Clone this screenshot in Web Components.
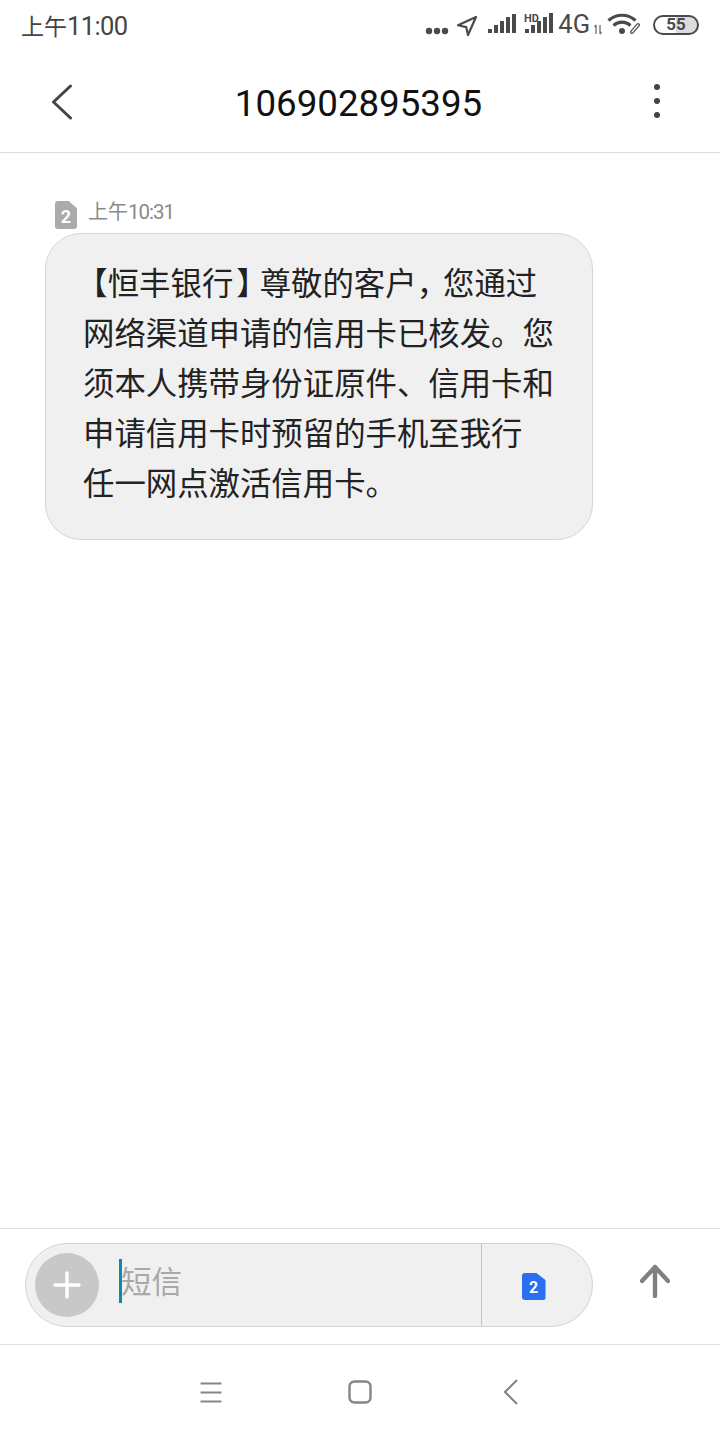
<!DOCTYPE html>
<html lang="zh">
<head>
<meta charset="utf-8">
<title>短信</title>
<style>
  html,body{margin:0;padding:0;background:#fff;}
  body{width:720px;height:1440px;overflow:hidden;font-family:"Noto Sans CJK SC","Noto Sans",sans-serif;}
  sms-screen{height:1440px;}
  /* скобки и запятая в половину кегля (halt), остальное добираем полями */
  .ob,.cb,.cm{font-feature-settings:"halt";}
  .ob{margin-left:9px;}
  .cb{margin:0 7.700px 0 3px;}
  .cm{margin-right:10.700px;}
</style>
</head>
<body>
<sms-screen>
  <status-bar slot="status" ampm="上午" time="11:00"></status-bar>
  <chat-header slot="header" title="106902895395"></chat-header>
  <sms-bubble ampm="上午" time="10:31" sim="2"><div><span class="ob">【</span>恒丰银行<span class="cb">】</span>尊敬的客户<span class="cm">，</span>您通过</div>网络渠道申请的信用卡已核发。您须本人携带身份证原件、信用卡和申请信用卡时预留的手机至我行<br>任一网点激活信用卡。</sms-bubble>
  <sms-composer slot="composer" placeholder="短信" sim="2"></sms-composer>
  <nav-bar slot="nav"></nav-bar>
</sms-screen>

<script>
(() => {
  const CJK = `"Noto Sans CJK SC","Noto Sans",sans-serif`;
  const LATIN = `Roboto,"Noto Sans CJK SC",sans-serif`;

  const define = (name, render) => {
    customElements.define(name, class extends HTMLElement {
      connectedCallback() {
        if (this.shadowRoot) return;
        this.attachShadow({ mode: 'open' }).innerHTML = render(this);
      }
    });
  };

  // карточка SIM: срезанный угол и цифра
  define('sim-badge', (el) => `
    <style>
      :host{display:block;width:var(--w,22px);height:var(--h,28px);}
      div{width:100%;height:100%;display:flex;align-items:center;justify-content:center;padding-top:var(--pt,3px);box-sizing:border-box;
        background:var(--bg,#ababab);border-radius:3px;color:#fff;font:700 var(--fs,18px)/1 ${LATIN};
        clip-path:polygon(0 0,62% 0,100% 26%,100% 100%,0 100%);}
    </style>
    <div>${el.getAttribute('n') || '2'}</div>`);

  define('sms-screen', () => `
    <style>
      :host{display:flex;flex-direction:column;width:720px;height:1440px;background:#fff;}
      main{flex:1;min-height:0;padding:47px 0 0 45px;}
    </style>
    <slot name="status"></slot>
    <slot name="header"></slot>
    <main><slot></slot></main>
    <slot name="composer"></slot>
    <slot name="nav"></slot>`);

  define('status-bar', (el) => `
    <style>
      :host{display:flex;align-items:center;height:52px;padding:0 21px;box-sizing:border-box;color:#444;}
      .time{display:flex;align-items:baseline;font:25.500px/1 ${LATIN};letter-spacing:-.6px;color:#444;flex:1;margin-top:1px;}
      .time b{font:400 23px/1 ${CJK};letter-spacing:0;}
      .icons{display:flex;align-items:center;height:52px;}
      svg{display:block;}
      .g{font:25.500px/1 ${LATIN};color:#4a4a4a;margin:-3px 0 0 5px;}
      .hd{font:700 11px ${LATIN};fill:#4a4a4a;}
      .batt{width:46px;height:20px;box-sizing:border-box;border:2.5px solid #4a4a4a;border-radius:10px;margin:-3px 0 0 13px;
        display:flex;align-items:center;justify-content:center;font:700 17px/1 ${LATIN};color:#4a4a4a;
        background:linear-gradient(90deg,#fff 0,#fff 50%,#dcdcdc 50%,#dcdcdc 100%);}
    </style>
    <div class="time"><b>${el.getAttribute('ampm')}</b>${el.getAttribute('time')}</div>
    <div class="icons">
      <svg width="24" height="8" viewBox="0 0 24 8" style="margin-top:10px"><g fill="#4a4a4a"><circle cx="4" cy="4" r="3.2"/><circle cx="12" cy="4" r="3.2"/><circle cx="20" cy="4" r="3.2"/></g></svg>
      <svg width="22" height="22" viewBox="0 0 22 22" style="margin-left:7px;margin-top:-1px"><path d="M20 2 2 10.2l8.2 1.9L12 20z" fill="none" stroke="#4a4a4a" stroke-width="2.2" stroke-linejoin="round"/></svg>
      <svg width="28" height="20" viewBox="0 0 28 20" style="margin:-4px 0 0 10px"><g fill="#4a4a4a"><rect x="0" y="15" width="4" height="4"/><rect x="6" y="11" width="4" height="8"/><rect x="12" y="7" width="4" height="12"/><rect x="18" y="3" width="4" height="16"/><rect x="24" y="0" width="4" height="19"/></g></svg>
      <svg width="29" height="22" viewBox="0 0 29 22" style="margin:-4px 0 0 8px"><text class="hd" x="0" y="9">HD</text><g fill="#4a4a4a"><rect x="1" y="16" width="4" height="4"/><rect x="7" y="12" width="4" height="8"/><rect x="13" y="8" width="4" height="12"/><rect x="19" y="4" width="4" height="16"/><rect x="25" y="0" width="4" height="20"/></g></svg>
      <span class="g">4G</span>
      <svg width="10" height="11" viewBox="0 0 10 11" style="margin-left:3px;margin-top:6px"><path d="M3 1v9M1.500 3 3 1M7 1v9M7 10l1.500-2" stroke="#777" stroke-width="1.400" fill="none"/></svg>
      <svg width="33" height="22" viewBox="0 0 33 22" style="margin:-4px 0 0 4px"><g fill="none" stroke="#4a4a4a" stroke-width="3.200"><path d="M1.500 7.500C9 .5 21 .5 28.500 7.500"/><path d="M6.500 12.500c5-4.400 12-4.400 17 0"/></g><circle cx="15" cy="18" r="3" fill="#4a4a4a"/><path d="m25 19 6-7" stroke="#4a4a4a" stroke-width="3.800" stroke-linecap="round" fill="none"/><path d="m25 19 6-7" stroke="#fff" stroke-width="1.400" stroke-linecap="round" fill="none"/></svg>
      <div class="batt">55</div>
    </div>`);

  define('chat-header', (el) => `
    <style>
      :host{display:flex;align-items:center;height:101px;box-sizing:border-box;border-bottom:1px solid #dcdcdc;padding:0 0 0 50px;}
      svg{display:block;flex:none;}
      h1{flex:1;margin:0 0 0 -11px;padding-top:4px;text-align:center;font:400 36.700px/1 ${LATIN};color:#111;}
      .more{display:flex;flex-direction:column;gap:8px;width:6px;margin:0 60px 2px 0;}
      .more i{display:block;width:6px;height:6px;border-radius:50%;background:#444;}
    </style>
    <svg width="24" height="36" viewBox="0 0 24 36" style="margin-bottom:1px"><path d="M20.500 2 3.500 18l17 16" fill="none" stroke="#444" stroke-width="3" stroke-linecap="round" stroke-linejoin="round"/></svg>
    <h1>${el.getAttribute('title')}</h1>
    <div class="more"><i></i><i></i><i></i></div>`);

  define('sms-bubble', (el) => `
    <style>
      :host{display:block;width:548px;}
      .meta{display:flex;align-items:flex-start;gap:11px;height:33px;padding-left:10px;}
      .meta span{display:flex;align-items:baseline;font:20.500px/22px ${LATIN};color:#8a8a8a;letter-spacing:-1px;}
      .meta b{font:400 20px/22px ${CJK};letter-spacing:0;}
      .box{box-sizing:border-box;width:548px;height:307px;padding:23px 36px 0 37px;background:#f0f0f0;border:1px solid #d6d6d6;border-radius:36px;
        font:31.400px/50px ${CJK};color:#222;}
      sim-badge{margin-top:1px;}
    </style>
    <div class="meta"><sim-badge n="${el.getAttribute('sim')}"></sim-badge><span><b>${el.getAttribute('ampm')}</b>${el.getAttribute('time')}</span></div>
    <div class="box"><slot></slot></div>`);

  define('sms-composer', (el) => `
    <style>
      :host{display:flex;align-items:center;height:117px;box-sizing:border-box;border-top:1px solid #e0e0e0;border-bottom:1px solid #e0e0e0;padding:0 0 4px 25px;}
      .field{display:flex;align-items:center;box-sizing:border-box;width:568px;height:84px;background:#f0f0f0;border:1px solid #d4d4d4;border-radius:42px;}
      .add{display:flex;align-items:center;justify-content:center;flex:none;width:64px;height:64px;margin-left:9px;border-radius:50%;background:#c8c8c8;}
      .input{flex:1;display:flex;align-items:center;padding:0 0 8px 20px;font:30.500px/1 ${CJK};color:#a8a8a8;}
      .caret{display:block;width:3px;height:44px;background:#0e88b0;margin-right:-1px;}
      .sim{display:flex;align-items:center;justify-content:center;flex:none;box-sizing:border-box;width:111px;height:82px;border-left:1px solid #c4c4c4;padding:4px 7px 0 0;}
      sim-badge{--w:24px;--h:27px;--bg:#2b6ff0;--fs:16px;--pt:2px;}
      .send{display:block;margin:0 0 8px 47px;}
    </style>
    <div class="field">
      <div class="add"><svg width="28" height="28" viewBox="0 0 28 28"><path d="M14 2v24M2 14h24" stroke="#fff" stroke-width="3.400" stroke-linecap="round"/></svg></div>
      <div class="input"><i class="caret"></i><span>${el.getAttribute('placeholder')}</span></div>
      <div class="sim"><sim-badge n="${el.getAttribute('sim')}"></sim-badge></div>
    </div>
    <svg class="send" width="30" height="34" viewBox="0 0 30 34"><path d="M15 32V3M2 17 15 3l13 14" fill="none" stroke="#808080" stroke-width="4.400" stroke-linecap="round" stroke-linejoin="round"/></svg>`);

  define('nav-bar', () => `
    <style>
      :host{display:flex;align-items:center;height:95px;padding:0 0 1px 199px;box-sizing:border-box;}
      svg{display:block;flex:none;}
    </style>
    <svg width="24" height="24" viewBox="0 0 24 24"><path d="M1.500 3.500h21M1.500 12.500h21M1.500 21.500h21" stroke="#868686" stroke-width="2.200" fill="none"/></svg>
    <svg width="24" height="24" viewBox="0 0 24 24" style="margin-left:125px"><rect x="1.500" y="1.500" width="21" height="21" rx="5" fill="none" stroke="#868686" stroke-width="2.400"/></svg>
    <svg width="16" height="26" viewBox="0 0 16 26" style="margin-left:131px"><path d="M14 1 2 13l12 12" fill="none" stroke="#868686" stroke-width="2.200"/></svg>`);
})();
</script>
</body>
</html>
